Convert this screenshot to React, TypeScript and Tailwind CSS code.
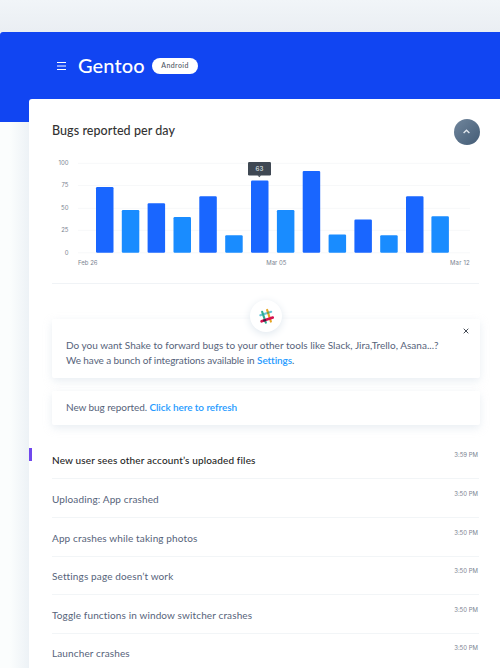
import React from "react";

const bars = [
  { x: 96, top: 187 },
  { x: 121.8, top: 210 },
  { x: 147.6, top: 203.2 },
  { x: 173.5, top: 217 },
  { x: 199.3, top: 196.3 },
  { x: 225.2, top: 235.3 },
  { x: 251, top: 180.6 },
  { x: 276.9, top: 210 },
  { x: 302.7, top: 170.9 },
  { x: 328.6, top: 234.6 },
  { x: 354.4, top: 219.6 },
  { x: 380.2, top: 235.3 },
  { x: 406, top: 196.3 },
  { x: 431.4, top: 216.3 },
];

const ticks = [
  { label: "100", y: 163 },
  { label: "75", y: 185.2 },
  { label: "50", y: 208 },
  { label: "25", y: 230 },
  { label: "0", y: 252.5 },
];

const bugs = [
  { title: "Uploading: App crashed", row: "h-[39px] pt-[10px]" },
  { title: "App crashes while taking photos", row: "h-[39px] pt-[10px]" },
  { title: "Settings page doesn’t work", row: "h-[38px] pt-[9px]" },
  { title: "Toggle functions in window switcher crashes", row: "h-[39px] pt-[10px]" },
  { title: "Launcher crashes", row: "h-[39px] pt-[9px]" },
];

function Chart() {
  return (
    <svg className="block h-[118px] w-[428px]" viewBox="52 152 428 118" fontFamily="Inter, 'Liberation Sans', sans-serif" fontSize="6" fill="#7b8491">
      {ticks.map((t) => (
        <g key={t.label}>
          <line x1="78" x2="470" y1={t.y + 0.3} y2={t.y + 0.3} stroke="#f7f8f9" />
          <text x="68.5" y={t.y + 2} textAnchor="end">{t.label}</text>
        </g>
      ))}
      {bars.map((b, i) => (
        <rect key={b.x} x={b.x} y={b.top} width="17.5" height={252.8 - b.top} rx="1.2" fill={i % 2 ? "#198cff" : "#1966ff"} />
      ))}
      <rect x="248" y="162" width="23" height="13.5" rx="1.2" fill="#3f4853" />
      <path d="M257.5 175.3h3.6l-1.8 2z" fill="#3f4853" />
      <text x="259.5" y="170.6" textAnchor="middle" fontSize="6.2" fontWeight="500" fill="#dfe3e8">63</text>
      <text x="78" y="264.7">Feb 26</text>
      <text x="266.3" y="264.7">Mar 05</text>
      <text x="469.8" y="264.7" textAnchor="end" letterSpacing="0.15">Mar 12</text>
    </svg>
  );
}

function SlackLogo() {
  return (
    <svg className="size-4" viewBox="258 308 16 16" fill="none" strokeWidth="2.1" strokeLinecap="round">
      <path d="M260.3 315.3 271.2 311.8" stroke="#68c5d8" />
      <path d="M267.1 309.9 270.9 321.6" stroke="#e6a526" />
      <path d="M262.2 311.8 265.8 322.7" stroke="#2fae90" />
      <path d="M261.6 321.3 272.8 317.6" stroke="#d5124f" strokeWidth="2.6" />
      <path d="M264.1 320.5 265.1 320.2" stroke="#3c1840" />
      <path d="M268 312.8 268.3 312.7" stroke="#77a249" />
    </svg>
  );
}

export default function App() {
  return (
    <div className="h-[668px] w-[500px] overflow-hidden bg-[#fbfcfc] font-[Lato,'Open_Sans',sans-serif]">
      <div className="h-8 bg-linear-to-b from-[#f1f5f8] to-[#eaeef3]" />
      <header className="flex h-[89.5px] items-start rounded-tl-[3px] bg-[#1145f2] pl-[57px] pt-[22px]">
        <svg className="mt-[7px] h-[10px] w-[9px]" viewBox="0 0 9 10" stroke="#fff" strokeWidth="1">
          <path d="M0 1.5h9M0 5h9M0 8.5h9" />
        </svg>
        <h1 className="ml-3 w-[66px] whitespace-nowrap text-[20px] font-medium leading-[22px] tracking-[0.1px] text-white">Gentoo</h1>
        <span className="ml-[8px] mt-[4px] flex h-[16px] w-[46px] items-center justify-center rounded-full bg-white pb-px text-[7px] font-medium tracking-[0.4px] text-[#4d5663]">
          Android
        </span>
      </header>
      <div className="-mt-[23px] flex h-[600px]">
        <div className="mt-[23px] w-[29px] shrink-0 bg-linear-to-r from-[#fbfdfd] from-35% to-[#edf2f6]" />
        <main className="w-[471px] shrink-0 rounded-tl-[3px] bg-white">
          <div className="ml-[23px] mr-[20.5px] flex h-[53.5px] items-start justify-between">
            <h2 className="mt-[23.5px] text-[12.5px] font-medium leading-[18px] tracking-[0.06px] text-[#333]">Bugs reported per day</h2>
            <div className="mt-5 flex size-[26px] items-center justify-center rounded-full bg-linear-to-br from-[#71869c] to-[#435c76]">
              <svg className="size-[9px]" viewBox="0 0 9 9" fill="none" stroke="#e1e7ee" strokeWidth="1.4">
                <path d="m1.6 5.9 2.9-2.6 2.9 2.6" />
              </svg>
            </div>
          </div>
          <div className="ml-[23px]">
            <Chart />
            <div className="mt-[12.5px] h-px w-[427px] bg-[#f0f3f6]" />
            <section className="relative mt-[35.5px] h-[58.5px] w-[428px] rounded-[2px] bg-white pl-[14px] pt-[18.5px] text-[10px] leading-[15px] text-[#56637a] shadow-[0_3px_8px_#dfe7eeb0]">
              <div className="absolute -top-[19.5px] left-[198px] flex size-8 items-center justify-center rounded-full bg-white shadow-[0_2px_8px_#dfe7ee]">
                <SlackLogo />
              </div>
              <svg className="absolute right-[11px] top-[9px] size-[6px]" viewBox="0 0 6 6" stroke="#444b55">
                <path d="m.7.7 4.6 4.6M5.3.7.7 5.3" />
              </svg>
              <p className="whitespace-nowrap tracking-[0.02px]">Do you want Shake to forward bugs to your other tools like Slack, Jira,Trello, Asana...?</p>
              <p className="whitespace-nowrap tracking-[-0.09px]">
                We have a bunch of integrations available in <a className="font-semibold text-[#259bff]">Settings</a>.
              </p>
            </section>
            <section className="mt-[13px] h-[34px] w-[428px] rounded-[2px] bg-white pl-[14px] text-[10px] leading-[33px] tracking-[-0.08px] text-[#56637a] shadow-[0_3px_8px_#dfe7eeb0]">
              New bug reported. <a className="font-semibold text-[#259bff]">Click here to refresh</a>
            </section>
          </div>
          <div className="mt-[15px]">
            <div className="flex h-[39px]">
              <i className="mt-[8px] h-[13px] w-[3px] bg-[#7048ed]" />
              <div className="ml-5 flex w-[427px] justify-between border-b border-[#f2f5f7]">
                <span className="pt-3 text-[10px] font-medium leading-[16px] tracking-[0.15px] text-[#242424]">New user sees other account’s uploaded files</span>
                <time className="pr-px pt-[10px] font-[Inter] text-[6px] leading-[9px] text-[#7b8491]">3:59 PM</time>
              </div>
            </div>
            {bugs.map((b) => (
              <div key={b.title} className={`ml-[23px] flex w-[427px] justify-between border-b border-[#f2f5f7] ${b.row}`}>
                <span className="pt-[2px] text-[10px] leading-[16px] tracking-[0.13px] text-[#56637a]">{b.title}</span>
                <time className="pr-px font-[Inter] text-[6px] leading-[9px] text-[#7b8491]">3:50 PM</time>
              </div>
            ))}
          </div>
        </main>
      </div>
    </div>
  );
}
